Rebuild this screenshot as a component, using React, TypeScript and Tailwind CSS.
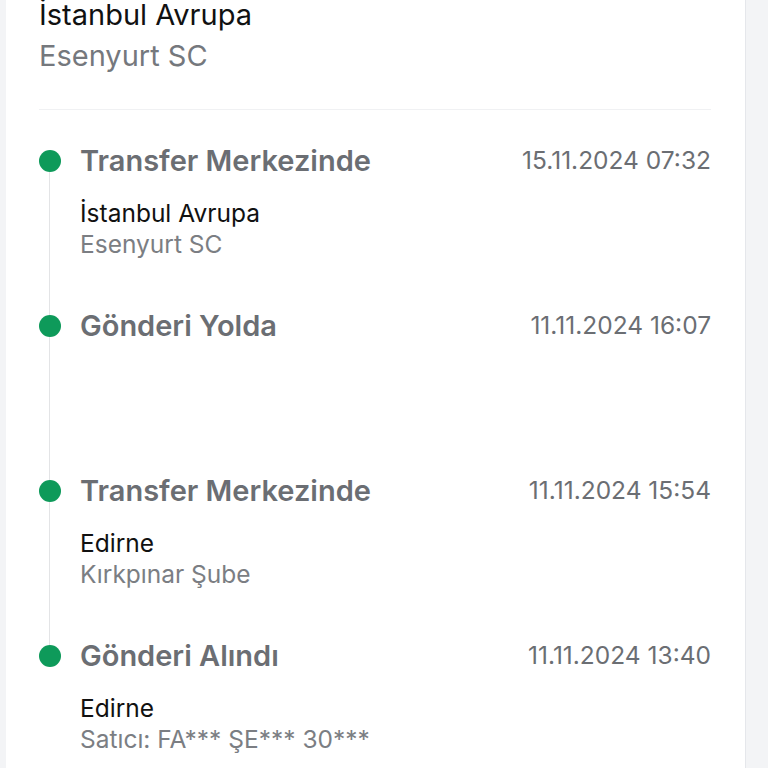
import React from "react";

type Item = { title: string; date: string; city?: string; detail?: string };

const items: Item[] = [
  { title: "Transfer Merkezinde", date: "15.11.2024 07:32", city: "İstanbul Avrupa", detail: "Esenyurt SC" },
  { title: "Gönderi Yolda", date: "11.11.2024 16:07" },
  { title: "Transfer Merkezinde", date: "11.11.2024 15:54", city: "Edirne", detail: "Kırkpınar Şube" },
  { title: "Gönderi Alındı", date: "11.11.2024 13:40", city: "Edirne", detail: "Satıcı: FA*** ŞE*** 30***" },
];

export default function App() {
  return (
    <div
      className="w-[768px] h-[768px] overflow-hidden bg-[#f3f4f6] flex"
      style={{ fontFamily: "Inter, 'Noto Sans', sans-serif" }}
    >
      <div className="ml-[6px] w-[740px] h-full bg-white border-r border-[#e5e7eb] pl-[33px] pr-[34px]">
        <div className="-mt-[6px] pb-[33px] border-b border-[#f0f1f3]">
          <div className="text-[29px] leading-[41px] text-[#111111]">İstanbul Avrupa</div>
          <div className="text-[29px] leading-[41px] text-[#75787d]">Esenyurt SC</div>
        </div>
        <div className="pt-[34px]">
          {items.map((it, i) => (
            <div key={i} className="relative h-[165px]">
              {i < items.length - 1 && (
                <div className="absolute left-[10px] top-[17px] h-[165px] w-px bg-[#e3e4e6]" />
              )}
              <div className="flex items-center h-[34px]">
                <div className="relative z-10 w-[22px] h-[22px] rounded-full bg-[#0e9a5a] shrink-0" />
                <div className="ml-[19px] flex-1 text-[29px] font-semibold text-[#6b6e73] leading-[34px]">
                  {it.title}
                </div>
                <div className="text-[24.5px] text-[#6b6e73] leading-[34px] -mt-[3px]">{it.date}</div>
              </div>
              {it.city && (
                <div className="ml-[41px] mt-[20px]">
                  <div className="text-[24.5px] leading-[31px] text-[#111111]">{it.city}</div>
                  <div className="text-[24.5px] leading-[31px] text-[#7b7e83]">{it.detail}</div>
                </div>
              )}
            </div>
          ))}
        </div>
      </div>
    </div>
  );
}
